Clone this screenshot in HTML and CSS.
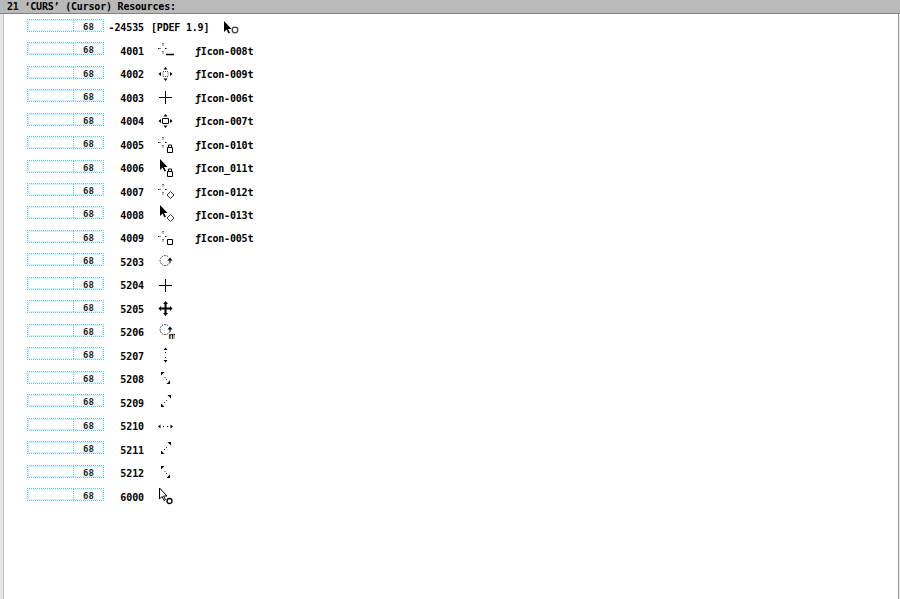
FILE: index.html
```html
<!DOCTYPE html>
<html lang="en">
<head>
  <meta charset="UTF-8" />
  <title>CURS Resources</title>
  <link rel="stylesheet" href="styles.css">
</head>
<body>
  <svg class="defs" width="0" height="0">
    <defs>
      <g id="dash-cross" fill="none" stroke="#000">
        <path d="M8 3v3M8 11v3M3 8.500h3M10 8.500h2" stroke-dasharray="1 .5"/>
      </g>
      <path id="black-arrow" d="M5 1v11l2.500-2.500 2 4 1.500-.8-2-3.700h3.500z" fill="#000"/>
      <path id="white-arrow" d="M4.500 2v11l2.500-2.500 2 4 1.500-.8-2-3.700h3.500z" fill="#fff" stroke="#000"/>
      <path id="lock" d="M12.500 13.500h5v5h-5zM13.500 13.500v-2.500h3v2.500" fill="#fff" stroke="#000"/>
      <path id="diamond" d="M15.500 10.500l3.500 3.500-3.500 3.500-3.500-3.500z" fill="#fff" stroke="#333"/>
      <path id="arrows" d="M10.500 3l2.500 3h-1.500v3.500h3.500v-1.500l2.500 2.500-2.500 2.500v-1.500h-3.500v3.500h1.500l-2.500 3-2.500-3h1.500v-3.500h-3.500v1.500l-2.500-2.500 2.500-2.500v1.500h3.500v-3.500h-1.500z" fill="#000"/>
      <g id="rotate">
        <path d="M13 5.500a5 5 0 1 0 1.500 6.500" fill="none" stroke="#333" stroke-dasharray="1.500 1"/>
        <path d="M15 6.500l2.500 3h-5z" fill="#000"/>
        <path d="M15 9v3" stroke="#000"/>
      </g>
      <g id="i-line"><use href="#dash-cross"/><path d="M11 14.500h8" stroke="#000" stroke-width="1.500"/></g>
      <g id="i-move-thin">
        <path d="M10.500 3l2 2.500h-4zM10.500 17l2-2.500h-4zM3.500 10l2.500-2v4zM17.500 10l-2.500-2v4z" fill="#000"/>
        <path d="M8 7.500h5v5h-5z" fill="none" stroke="#444" stroke-dasharray="1 1"/>
      </g>
      <g id="i-plus"><path d="M10.500 4v13M4 10.500h13" stroke="#000" fill="none"/></g>
      <g id="i-move-box">
        <path d="M10.500 3l2 2.500h-4zM10.500 17l2-2.500h-4zM3.500 10l2.500-2v4zM17.500 10l-2.500-2v4z" fill="#000"/>
        <path d="M7.500 7.500h6v5h-6z" fill="#fff" stroke="#000"/>
      </g>
      <g id="i-cross-lock"><use href="#dash-cross"/><use href="#lock"/></g>
      <g id="i-arrow-lock"><use href="#black-arrow"/><use href="#lock"/></g>
      <g id="i-cross-diamond"><use href="#dash-cross"/><use href="#diamond"/></g>
      <g id="i-arrow-diamond"><use href="#black-arrow"/><use href="#diamond"/></g>
      <g id="i-cross-square"><use href="#dash-cross"/><path d="M12.500 11.500h5v5h-5z" fill="#fff" stroke="#000"/></g>
      <g id="i-rotate-m">
        <use href="#rotate" y="-2"/>
        <text class="icon-m" x="13.500" y="17">m</text>
      </g>
      <g id="i-updown" fill="#000">
        <path d="M10.500 2.500l2 2.500h-4zM10.500 17.500l2-2.500h-4z"/>
        <path d="M10.500 7v1M10.500 12v1" stroke="#000"/>
      </g>
      <g id="i-leftright" fill="#000">
        <path d="M3 10.500l2.500-2v4zM18 10.500l-2.500-2v4z"/>
        <path d="M8 10.500h1M12 10.500h1" stroke="#000"/>
      </g>
      <g id="i-nwse" fill="#000">
        <path d="M6 3h3.500l-3.500 3.500z"/>
        <path d="M15 15h-3.500l3.500-3.500z"/>
        <path d="M9.500 8l.8.8M11 10l.8.8" stroke="#000"/>
      </g>
      <g id="i-nesw" fill="#000">
        <path d="M16 3h-3.500l3.500 3.500z"/>
        <path d="M6 15h3.500l-3.500-3.500z"/>
        <path d="M12 8l-.8.8M10 10l-.8.8" stroke="#000"/>
      </g>
      <g id="i-arrow-circle"><use href="#white-arrow"/><circle cx="14.500" cy="15" r="2.500" fill="#fff" stroke="#000" stroke-width="1.300"/></g>
      <g id="i-black-circle"><use href="#black-arrow" x="-1" y="3"/><circle cx="15" cy="13" r="2.800" fill="#fff" stroke="#444" stroke-width="1.300"/></g>
    </defs>
  </svg>

  <div class="window">
    <div class="title-bar">21 ‘CURS’ (Cursor) Resources:</div>
    <div class="list">
      <div class="row"><div class="size-box"><span class="size-empty"></span><span class="size-num">68</span></div><span class="res-id">-24535</span><span class="res-note">[PDEF 1.9]</span><svg class="icon" viewBox="0 0 20 20"><use href="#i-black-circle"/></svg></div>
      <div class="row"><div class="size-box"><span class="size-empty"></span><span class="size-num">68</span></div><span class="res-id">4001</span><svg class="icon" viewBox="0 0 20 20"><use href="#i-line"/></svg><span class="res-name">ƒIcon-008t</span></div>
      <div class="row"><div class="size-box"><span class="size-empty"></span><span class="size-num">68</span></div><span class="res-id">4002</span><svg class="icon" viewBox="0 0 20 20"><use href="#i-move-thin"/></svg><span class="res-name">ƒIcon-009t</span></div>
      <div class="row"><div class="size-box"><span class="size-empty"></span><span class="size-num">68</span></div><span class="res-id">4003</span><svg class="icon" viewBox="0 0 20 20"><use href="#i-plus"/></svg><span class="res-name">ƒIcon-006t</span></div>
      <div class="row"><div class="size-box"><span class="size-empty"></span><span class="size-num">68</span></div><span class="res-id">4004</span><svg class="icon" viewBox="0 0 20 20"><use href="#i-move-box"/></svg><span class="res-name">ƒIcon-007t</span></div>
      <div class="row"><div class="size-box"><span class="size-empty"></span><span class="size-num">68</span></div><span class="res-id">4005</span><svg class="icon" viewBox="0 0 20 20"><use href="#i-cross-lock"/></svg><span class="res-name">ƒIcon-010t</span></div>
      <div class="row"><div class="size-box"><span class="size-empty"></span><span class="size-num">68</span></div><span class="res-id">4006</span><svg class="icon" viewBox="0 0 20 20"><use href="#i-arrow-lock"/></svg><span class="res-name">ƒIcon_011t</span></div>
      <div class="row"><div class="size-box"><span class="size-empty"></span><span class="size-num">68</span></div><span class="res-id">4007</span><svg class="icon" viewBox="0 0 20 20"><use href="#i-cross-diamond"/></svg><span class="res-name">ƒIcon-012t</span></div>
      <div class="row"><div class="size-box"><span class="size-empty"></span><span class="size-num">68</span></div><span class="res-id">4008</span><svg class="icon" viewBox="0 0 20 20"><use href="#i-arrow-diamond"/></svg><span class="res-name">ƒIcon-013t</span></div>
      <div class="row"><div class="size-box"><span class="size-empty"></span><span class="size-num">68</span></div><span class="res-id">4009</span><svg class="icon" viewBox="0 0 20 20"><use href="#i-cross-square"/></svg><span class="res-name">ƒIcon-005t</span></div>
      <div class="row"><div class="size-box"><span class="size-empty"></span><span class="size-num">68</span></div><span class="res-id">5203</span><svg class="icon" viewBox="0 0 20 20"><use href="#rotate"/></svg></div>
      <div class="row"><div class="size-box"><span class="size-empty"></span><span class="size-num">68</span></div><span class="res-id">5204</span><svg class="icon" viewBox="0 0 20 20"><use href="#i-plus"/></svg></div>
      <div class="row"><div class="size-box"><span class="size-empty"></span><span class="size-num">68</span></div><span class="res-id">5205</span><svg class="icon" viewBox="0 0 20 20"><use href="#arrows"/></svg></div>
      <div class="row"><div class="size-box"><span class="size-empty"></span><span class="size-num">68</span></div><span class="res-id">5206</span><svg class="icon" viewBox="0 0 20 20"><use href="#i-rotate-m"/></svg></div>
      <div class="row"><div class="size-box"><span class="size-empty"></span><span class="size-num">68</span></div><span class="res-id">5207</span><svg class="icon" viewBox="0 0 20 20"><use href="#i-updown"/></svg></div>
      <div class="row"><div class="size-box"><span class="size-empty"></span><span class="size-num">68</span></div><span class="res-id">5208</span><svg class="icon" viewBox="0 0 20 20"><use href="#i-nwse"/></svg></div>
      <div class="row"><div class="size-box"><span class="size-empty"></span><span class="size-num">68</span></div><span class="res-id">5209</span><svg class="icon" viewBox="0 0 20 20"><use href="#i-nesw"/></svg></div>
      <div class="row"><div class="size-box"><span class="size-empty"></span><span class="size-num">68</span></div><span class="res-id">5210</span><svg class="icon" viewBox="0 0 20 20"><use href="#i-leftright"/></svg></div>
      <div class="row"><div class="size-box"><span class="size-empty"></span><span class="size-num">68</span></div><span class="res-id">5211</span><svg class="icon" viewBox="0 0 20 20"><use href="#i-nesw"/></svg></div>
      <div class="row"><div class="size-box"><span class="size-empty"></span><span class="size-num">68</span></div><span class="res-id">5212</span><svg class="icon" viewBox="0 0 20 20"><use href="#i-nwse"/></svg></div>
      <div class="row"><div class="size-box"><span class="size-empty"></span><span class="size-num">68</span></div><span class="res-id">6000</span><svg class="icon" viewBox="0 0 20 20"><use href="#i-arrow-circle"/></svg></div>
    </div>
  </div>
</body>
</html>
```

FILE: styles.css
```css
html, body {
  margin: 0;
  height: 100%;
  overflow: hidden;
  background-color: #fff;
}

body {
  font-family: "DejaVu Sans Mono", monospace;
  font-size: 10px;
  font-weight: bold;
  color: #000;
}

.defs {
  display: none;
}

.window {
  display: flex;
  flex-direction: column;
  height: 599px;
  background-color: #e6e6e6;
}

.title-bar {
  height: 13px;
  line-height: 13px;
  padding-left: 7px;
  background-color: #b9b9b9;
  border-bottom: 1px solid #808080;
  letter-spacing: -0.2px;
  flex-shrink: 0;
}

/* White list area, grey edge left and right */
.list {
  flex: 1;
  margin: 0 1px 0 3px;
  padding-top: 1px;
  background-color: #fff;
  border-left: 1px solid #c4c4c4;
  border-right: 1px solid #999;
}

.row {
  display: flex;
  align-items: center;
  height: 23.47px;
  padding-left: 23px;
}

.size-box {
  display: flex;
  width: 75px;
  height: 11px;
  margin-top: -3px;
  border: 1px dotted #5cc9f3;
  box-shadow: inset 0 0 0 1px #d2f1fd;
}

.size-empty {
  width: 45px;
  border-right: 1px dotted #5cc9f3;
}

.size-num {
  flex: 1;
  line-height: 14px;
  text-align: center;
  color: #222;
  font-size: 9px;
}

.res-id {
  width: 40px;
  padding-top: 2px;
  text-align: right;
  letter-spacing: -0.1px;
}

.icon {
  width: 20px;
  height: 20px;
  margin-left: 11px;
}

.res-note {
  width: 69px;
  margin-left: 7px;
  padding-top: 2px;
  letter-spacing: -0.2px;
}

.res-note + .icon {
  margin-left: 0;
}

.res-name {
  margin-left: 20px;
  padding-top: 2px;
  letter-spacing: -0.2px;
}

.icon-m {
  font-family: "Liberation Sans", sans-serif;
  font-size: 9px;
}
```
